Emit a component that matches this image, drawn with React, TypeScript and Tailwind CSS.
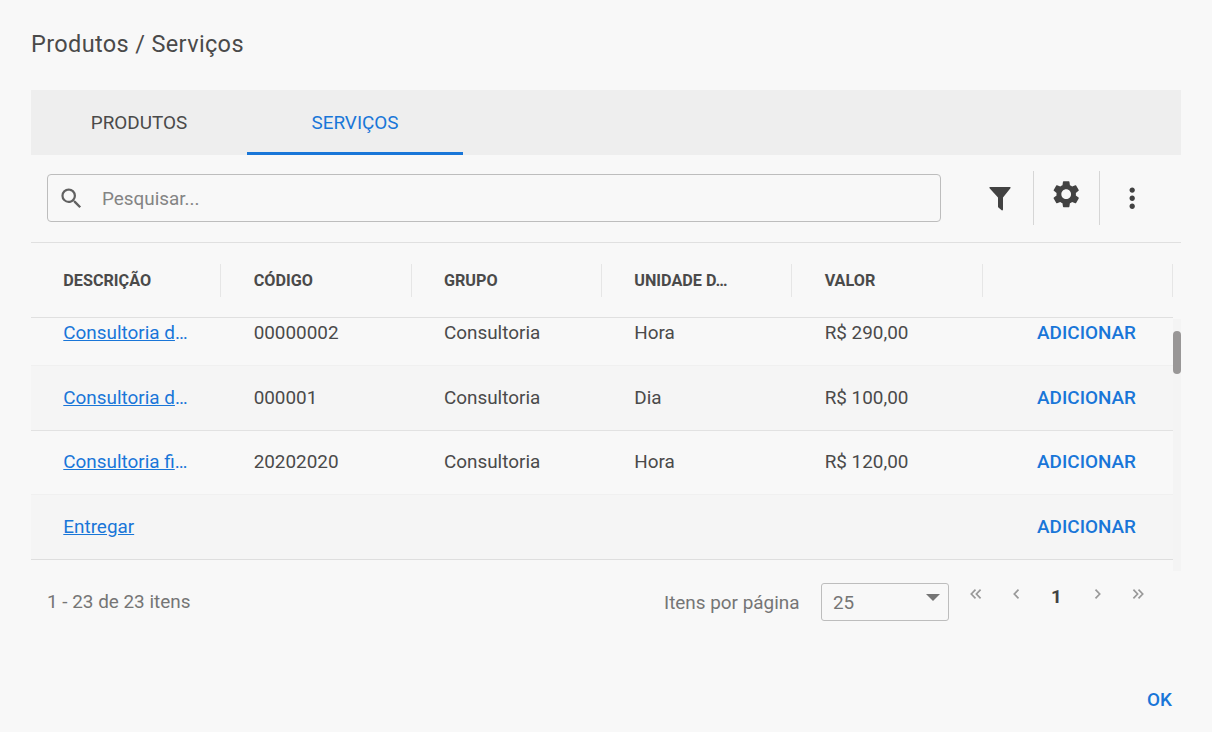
import { MdMoreVert, MdSearch, MdSettings } from "react-icons/md";

type Row = {
  name: string;
  truncated?: boolean;
  code: string;
  group: string;
  unit: string;
  value: string;
  className: string;
};

const columns = [
  { label: "DESCRIÇÃO" },
  { label: "CÓDIGO" },
  { label: "GRUPO" },
  { label: "UNIDADE D…" },
  { label: "VALOR" },
  { label: "" },
];

const rows: Row[] = [
  { name: "Consultoria d", truncated: true, code: "00000002", group: "Consultoria", unit: "Hora", value: "R$ 290,00", className: "h-12 border-[#f0f0f0] pb-[18px]" },
  { name: "Consultoria d", truncated: true, code: "000001", group: "Consultoria", unit: "Dia", value: "R$ 100,00", className: "h-[65px] border-[#e2e2e2] bg-[#f5f5f5] pb-px" },
  { name: "Consultoria fi", truncated: true, code: "20202020", group: "Consultoria", unit: "Hora", value: "R$ 120,00", className: "h-16 border-[#f0f0f0] pb-px" },
  { name: "Entregar", code: "", group: "", unit: "", value: "", className: "h-[65px] border-[#dedede] bg-[#f5f5f5] pb-px" },
];

function Funnel() {
  return (
    <svg width="22" height="25" viewBox="0 0 22 25" fill="currentColor">
      <path d="M1.2 .9h19.6c.8 0 1 .7.6 1.3L14 11.6v12c0 .8-.7 1.1-1.3.6l-3.3-2.8c-.3-.3-.4-.5-.4-.9v-8.9L.6 2.2C.2 1.6.4.9 1.2.9z" />
    </svg>
  );
}

function Chevron({ flip = false, double = false }: { flip?: boolean; double?: boolean }) {
  return (
    <svg
      width={double ? 12 : 7}
      height="10"
      viewBox={double ? "0 0 12 10" : "0 0 7 10"}
      className={flip ? "-scale-x-100" : ""}
      fill="none"
      stroke="currentColor"
      strokeWidth="1.7"
    >
      <path d="M5.5 .7 1.3 5l4.2 4.3" />
      {double && <path d="M10.6 .7 6.4 5l4.2 4.3" />}
    </svg>
  );
}

export default function App() {
  return (
    <main className="h-[732px] w-[1212px] overflow-hidden bg-[#f8f8f8] pr-[31px] pl-[31px] font-['Roboto',sans-serif] text-[18.9px] leading-6 text-[#4a4a4a]">
      <h1 className="flex h-[90px] items-center pb-[3px] text-[23.5px] tracking-[0.36px]">Produtos / Serviços</h1>

      <nav className="flex h-[65px] bg-[#eeeeee]">
        <button className="flex w-[216px] items-center justify-center pt-px">PRODUTOS</button>
        <button className="flex w-[216px] items-center justify-center border-b-[3px] border-[#1976d8] pt-1 text-[#1976d8]">SERVIÇOS</button>
      </nav>

      <section className="flex h-[88px] border-b border-[#e0e0e0] pt-4 pl-4">
        <label className="mt-[3px] flex h-12 w-[894px] items-center rounded-[4px] border border-[#bdbdbd] pl-2.5 text-[#616161]">
          <MdSearch size={27} />
          <span className="pt-0.5 pl-[17px] text-[#848484]">Pesquisar...</span>
        </label>
        <div className="ml-[26px] flex h-[54px] text-[#424242]">
          <button className="flex w-[67px] items-center justify-center border-r border-[#d6d6d6]">
            <Funnel />
          </button>
          <button className="flex w-[66px] items-center justify-center border-r border-[#d6d6d6] pb-2">
            <MdSettings size={32.4} />
          </button>
          <button className="flex w-[65px] items-center justify-center">
            <MdMoreVert size={32.4} />
          </button>
        </div>
      </section>

      <section className="flex h-[328px]">
        <div className="w-[1142px]">
          <div className="grid h-[75px] grid-cols-6 items-center border-b border-[#e0e0e0] text-[16.2px] font-bold">
            {columns.map((column, i) => (
              <div key={i} className="flex h-[33px] items-center border-r border-[#e6e6e6] pt-0.5 pl-[32.3px]">
                {column.label}
              </div>
            ))}
          </div>
          {rows.map((row, i) => (
            <div key={i} className={`grid grid-cols-6 items-center border-b ${row.className}`}>
              <div className="pl-[32.3px] text-[#1976d8]">
                <a className="underline">{row.name}</a>
                {row.truncated && "…"}
              </div>
              <div className="pl-[32.3px]">{row.code}</div>
              <div className="pl-[32.3px]">{row.group}</div>
              <div className="pl-[32.3px]">{row.unit}</div>
              <div className="pl-[32.3px]">{row.value}</div>
              <button className="pr-[37px] text-right font-medium text-[#1976d8]">ADICIONAR</button>
            </div>
          ))}
        </div>
        <div className="mt-[76px] h-[252px] w-2 bg-[#f4f4f4] pt-3">
          <div className="h-[43px] w-2 rounded-full bg-[#999797]" />
        </div>
      </section>

      <footer className="flex h-[50px] items-start text-[#757575]">
        <span className="mt-[19px] ml-4 w-[617px]">1 - 23 de 23 itens</span>
        <span className="mt-5 w-[157px]">Itens por página</span>
        <button className="mt-3 flex h-[38px] w-32 items-center justify-between rounded-[3px] border border-[#bdbdbd] pt-px pr-2 pl-[11px]">
          25
          <svg width="14" height="7" viewBox="0 0 14 7" fill="#757575" className="mb-2.5">
            <path d="M0 0h14L7 7z" />
          </svg>
        </button>
        <div className="mt-[17.5px] ml-[21px] flex h-3 items-start text-[#999]">
          <button className="w-[43px]"><Chevron double /></button>
          <button className="w-[39px]"><Chevron /></button>
          <span className="-mt-[3.5px] -ml-px w-[43px] font-bold text-[#424242]">1</span>
          <button className="w-[38px]"><Chevron flip /></button>
          <button><Chevron double flip /></button>
        </div>
      </footer>

      <div className="flex justify-end pt-[67px] pr-[9px] font-medium text-[#1976d8]">
        <button>OK</button>
      </div>
    </main>
  );
}
